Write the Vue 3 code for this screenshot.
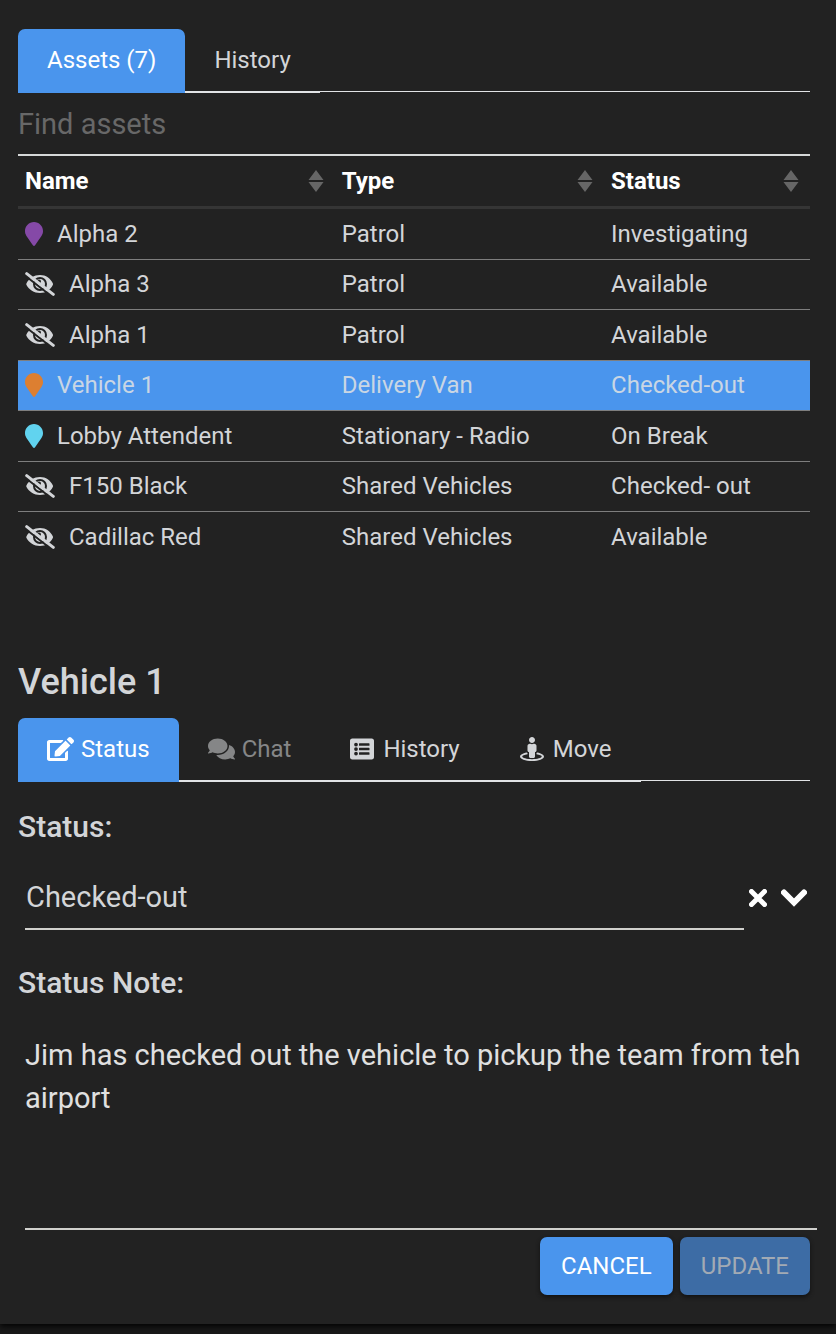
<script setup>
import { ref } from 'vue'

const mainTab = ref('assets')
const detailTab = ref('status')
const search = ref('')
const selected = ref('Vehicle 1')
const status = ref('Checked-out')
const note = ref('Jim has checked out the vehicle to pickup the team from teh airport')

const columns = [
  { key: 'name', label: 'Name' },
  { key: 'type', label: 'Type' },
  { key: 'status', label: 'Status' },
]

const assets = [
  { name: 'Alpha 2', type: 'Patrol', status: 'Investigating', pin: 'purple' },
  { name: 'Alpha 3', type: 'Patrol', status: 'Available' },
  { name: 'Alpha 1', type: 'Patrol', status: 'Available' },
  { name: 'Vehicle 1', type: 'Delivery Van', status: 'Checked-out', pin: 'orange' },
  { name: 'Lobby Attendent', type: 'Stationary - Radio', status: 'On Break', pin: 'cyan' },
  { name: 'F150 Black', type: 'Shared Vehicles', status: 'Checked- out' },
  { name: 'Cadillac Red', type: 'Shared Vehicles', status: 'Available' },
]

const detailTabs = [
  {
    id: 'status',
    label: 'Status',
    box: '0 0 576 512',
    wide: true,
    path: 'M402.6 83.2l90.2 90.2c3.8 3.8 3.8 10 0 13.8L274.4 405.6l-92.8 10.3c-12.4 1.4-22.9-9.1-21.5-21.5l10.3-92.8L388.8 83.2c3.8-3.8 10-3.8 13.8 0zm162-22.9l-48.8-48.8c-15.2-15.2-39.9-15.2-55.2 0l-35.4 35.4c-3.8 3.8-3.8 10 0 13.8l90.2 90.2c3.8 3.8 10 3.8 13.8 0l35.4-35.4c15.2-15.3 15.2-40 0-55.2zM384 346.2V448H64V128h229.8c3.2 0 6.2-1.3 8.5-3.5l40-40c7.6-7.6 2.2-20.5-8.5-20.5H48C21.5 64 0 85.5 0 112v352c0 26.5 21.5 48 48 48h352c26.5 0 48-21.5 48-48V306.2c0-10.7-12.9-16-20.5-8.5l-40 40c-2.2 2.3-3.5 5.3-3.5 8.5z',
  },
  {
    id: 'chat',
    label: 'Chat',
    box: '0 0 576 512',
    wide: true,
    disabled: true,
    path: 'M416 192c0-88.4-93.1-160-208-160S0 103.6 0 192c0 34.3 14.1 65.9 38 92-13.4 30.2-35.5 54.2-35.8 54.5-2.2 2.3-2.8 5.7-1.5 8.7S4.8 352 8 352c36.6 0 66.9-12.3 88.7-25 32.2 15.7 70.3 25 111.3 25 114.9 0 208-71.6 208-160zm122 220c23.9-26 38-57.7 38-92 0-66.9-53.5-124.2-129.3-148.1.9 6.6 1.3 13.3 1.3 20.1 0 105.9-107.7 192-240 192-10.8 0-21.3-.8-31.7-1.9C207.8 439.6 281.8 480 368 480c41 0 79.1-9.2 111.3-25 21.8 12.7 52.1 25 88.7 25 3.2 0 6.1-1.9 7.3-4.8 1.3-2.9.7-6.3-1.5-8.7-.3-.3-22.4-24.2-35.8-54.5z',
  },
  {
    id: 'history',
    label: 'History',
    box: '0 0 512 512',
    path: 'M464 480H48c-26.5 0-48-21.5-48-48V80c0-26.5 21.5-48 48-48h416c26.5 0 48 21.5 48 48v352c0 26.5-21.5 48-48 48zM128 120a40 40 0 1 0 0 80a40 40 0 1 0 0-80zm0 96a40 40 0 1 0 0 80a40 40 0 1 0 0-80zm0 96a40 40 0 1 0 0 80a40 40 0 1 0 0-80zM204 132a12 12 0 0 0-12 12v32a12 12 0 0 0 12 12h200a12 12 0 0 0 12-12v-32a12 12 0 0 0-12-12zm0 96a12 12 0 0 0-12 12v32a12 12 0 0 0 12 12h200a12 12 0 0 0 12-12v-32a12 12 0 0 0-12-12zm0 96a12 12 0 0 0-12 12v32a12 12 0 0 0 12 12h200a12 12 0 0 0 12-12v-32a12 12 0 0 0-12-12z',
  },
  {
    id: 'move',
    label: 'Move',
    box: '0 0 512 512',
    path: 'M367.9 329.76c-4.62 5.3-9.78 10.1-15.9 13.65v22.94c66.52 9.34 112 28.05 112 49.65 0 30.93-93.12 56-208 56S48 446.93 48 416c0-21.6 45.48-40.3 112-49.65v-22.94c-6.12-3.55-11.28-8.35-15.9-13.65C58.87 345.34 0 378.05 0 416c0 53.02 114.62 96 256 96s256-42.98 256-96c0-37.95-58.87-70.66-144.1-86.24zM256 128c35.35 0 64-28.65 64-64S291.35 0 256 0s-64 28.65-64 64 28.65 64 64 64zm-64 192v96c0 17.67 14.33 32 32 32h64c17.67 0 32-14.33 32-32v-96c17.67 0 32-14.33 32-32v-96c0-26.51-21.49-48-48-48h-11.8c-11.07 5.03-23.26 8-36.2 8s-25.13-2.97-36.2-8H208c-26.51 0-48 21.49-48 48v96c0 17.67 14.33 32 32 32z',
  },
]
</script>

<template>
  <main class="panel">
    <div class="tabs" role="tablist" aria-label="Lists">
      <button class="tab" :class="{ active: mainTab === 'assets' }" role="tab" type="button" @click="mainTab = 'assets'">Assets (7)</button>
      <button class="tab" :class="{ active: mainTab === 'history' }" role="tab" type="button" @click="mainTab = 'history'">History</button>
    </div>

    <input v-model="search" class="search" type="text" placeholder="Find assets" aria-label="Find assets" />

    <table class="assets">
      <thead>
        <tr>
          <th v-for="col in columns" :key="col.key" :class="'col-' + col.key" scope="col">
            <div class="head">
              <span>{{ col.label }}</span>
              <svg class="sort" viewBox="0 0 16 22" aria-hidden="true"><path d="M8 0L15.5 10H.5zM8 22L.5 12h15z" /></svg>
            </div>
          </th>
        </tr>
      </thead>
      <tbody>
        <tr v-for="asset in assets" :key="asset.name" :class="{ selected: asset.name === selected }" @click="selected = asset.name">
          <td>
            <div class="name">
              <svg v-if="asset.pin" class="pin" :class="asset.pin" viewBox="0 0 384 512" aria-hidden="true"><path d="M172.268 501.67C26.97 291.031 0 269.413 0 192 0 85.961 85.961 0 192 0s192 85.961 192 192c0 77.413-26.97 99.031-172.268 309.67-9.535 13.774-29.93 13.773-39.464 0z" /></svg>
              <svg v-else class="hidden-eye" viewBox="0 0 30 24" aria-hidden="true">
                <path class="lid" d="M1.500 11.200C4 6.500 9 3 15 3s10.500 3.500 12.800 8.200q.5.900 0 1.800C25.500 17.500 21 21 15 21S4 17.500 1.500 13q-.5-.9 0-1.800z" />
                <circle class="cut" cx="15" cy="12" r="6" />
                <circle class="cut" cx="14" cy="9.500" r="1" />
                <path class="cut" d="M-2 2L27.500 25" />
                <path class="slash" d="M1.700 1.600L28.300 22.400" />
              </svg>
              <span>{{ asset.name }}</span>
            </div>
          </td>
          <td>{{ asset.type }}</td>
          <td>{{ asset.status }}</td>
        </tr>
      </tbody>
    </table>

    <section class="detail">
      <h2>{{ selected }}</h2>
      <div class="tabs" role="tablist" aria-label="Asset details">
        <button
          v-for="tab in detailTabs"
          :key="tab.id"
          class="tab"
          :class="{ active: detailTab === tab.id, square: !tab.wide }"
          :disabled="tab.disabled"
          role="tab"
          type="button"
          @click="detailTab = tab.id"
        >
          <svg class="tab-icon" :viewBox="tab.box" aria-hidden="true"><path :d="tab.path" /></svg>
          <span>{{ tab.label }}</span>
        </button>
      </div>

      <form @submit.prevent>
        <label class="label" for="status">Status:</label>
        <div class="status-row">
          <input id="status" v-model="status" class="status-input" type="text" />
          <button class="icon-button" type="button" aria-label="Clear status" @click="status = ''">
            <svg class="clear" viewBox="0 0 18 18" aria-hidden="true"><path d="M2.5 2.5l13 13M15.5 2.5l-13 13" /></svg>
          </button>
          <button class="icon-button" type="button" aria-label="Show statuses">
            <svg class="chevron" viewBox="0 0 26 18" aria-hidden="true"><path d="M3 3.500L13 13.500 23 3.500" /></svg>
          </button>
        </div>

        <label class="label" for="note">Status Note:</label>
        <textarea id="note" v-model="note" class="note" rows="4"></textarea>

        <div class="actions">
          <button class="action" type="button">CANCEL</button>
          <button class="action" type="submit" disabled>UPDATE</button>
        </div>
      </form>
    </section>
  </main>
  <div class="edge"></div>
</template>

<style>
body {
  background: #191919;
}
</style>

<style scoped>
* {
  box-sizing: border-box;
}

.panel {
  padding: 29px 26px 29px 18px;
  background: #222;
  box-shadow: 0 2px 6px #000;
  color: #d3d5d8;
  font: 24px/28px Roboto, sans-serif;
}

.edge {
  height: 10px;
}

button,
input,
textarea {
  margin: 0;
  padding: 0;
  border: 0;
  border-radius: 0;
  outline: 0;
  background: none;
  color: inherit;
  font: inherit;
}

.tabs {
  display: flex;
  height: 63px;
  border-bottom: 1px solid #e2e4e6;
}

.tab {
  display: flex;
  align-items: center;
  gap: 7px;
  height: 64px;
  padding: 0 29px;
  border-bottom: 2px solid #e2e4e6;
}

.tab.square {
  gap: 9px;
  padding: 0 30px;
}

.tab.active {
  border-color: #4a95ed;
  border-radius: 7px 7px 0 0;
  background: #4a95ed;
  color: #fff;
}

.tab:disabled {
  color: #858687;
}

.tab-icon {
  width: 27px;
  height: 24px;
  fill: currentColor;
}

.square .tab-icon {
  width: 24px;
}

.search {
  display: block;
  width: 100%;
  height: 64px;
  padding-top: 2px;
  border-bottom: 2px solid #d6d8d8;
  font-size: 29px;
}

.search::placeholder {
  color: #686868;
  opacity: 1;
}

.assets {
  width: 100%;
  border-collapse: separate;
  border-spacing: 0;
  table-layout: fixed;
}

.assets th {
  height: 53px;
  padding: 0 7px;
  border-bottom: 3px solid #353535;
  color: #fff;
  font-weight: 700;
  text-align: left;
}

.col-name {
  width: 40%;
}

.col-type {
  width: 34%;
}

.col-status {
  width: 26%;
}

.head {
  display: flex;
  align-items: center;
  justify-content: space-between;
  padding-right: 4px;
}

.sort {
  width: 16px;
  height: 22px;
  fill: #666;
}

.assets td {
  height: 51px;
  padding: 0 7px;
  border-bottom: 1px solid #7e7e7e;
}

.assets tr:nth-child(even) td {
  height: 50px;
  padding-bottom: 2px;
}

.assets tr:last-child td {
  border-bottom-color: transparent;
}

.assets .selected {
  background: #4a95ed;
  color: #c9d6e4;
}

.name {
  display: flex;
  align-items: center;
  gap: 14px;
}

.pin {
  width: 18px;
  height: 24px;
}

.purple {
  fill: #8549a7;
}

.orange {
  fill: #dd7f31;
}

.cyan {
  fill: #61d3ef;
}

.hidden-eye {
  width: 30px;
  height: 24px;
  fill: none;
  stroke-linecap: round;
}

.lid {
  fill: #d3d5d8;
}

.cut {
  stroke: #222;
  stroke-width: 2;
}

.selected .cut {
  stroke: #4a95ed;
}

.slash {
  stroke: #d3d5d8;
  stroke-width: 3;
}

.detail {
  padding-top: 97px;
}

h2 {
  margin: 0 0 14px;
  font-size: 36px;
  font-weight: 500;
  line-height: 44px;
}

.label {
  display: block;
  padding-top: 28px;
  font-size: 30px;
  font-weight: 500;
  line-height: 36px;
}

.status-row {
  display: flex;
  align-items: center;
  margin: 19px 0 7px 7px;
}

.status-input {
  flex: 1;
  min-width: 0;
  height: 66px;
  padding: 2px 1px 0;
  border-bottom: 2px solid #d0d0cd;
  font-size: 29px;
}

.icon-button {
  display: flex;
  padding: 2px 0 0 5px;
}

.icon-button + .icon-button {
  padding: 2px 3px 0 14px;
}

.icon-button svg {
  height: 18px;
  fill: none;
  stroke: #fff;
  stroke-linecap: round;
}

.clear {
  width: 18px;
  stroke-width: 5;
}

.chevron {
  width: 26px;
  stroke-width: 6;
}

.note {
  display: block;
  width: 100%;
  height: 196px;
  margin: 33px 0 7px 7px;
  border-bottom: 2px solid #d0d0cd;
  color: #e0e0e0;
  font-size: 29px;
  line-height: 43px;
  resize: none;
}

.actions {
  display: flex;
  justify-content: flex-end;
  gap: 7px;
}

.action {
  height: 58px;
  padding: 0 21px;
  border-radius: 7px;
  background: #4a95ed;
  box-shadow: 0 2px 4px #111;
  color: #fff;
}

.action:disabled {
  background: #3d6ca5;
  color: #a2aab4;
}
</style>
